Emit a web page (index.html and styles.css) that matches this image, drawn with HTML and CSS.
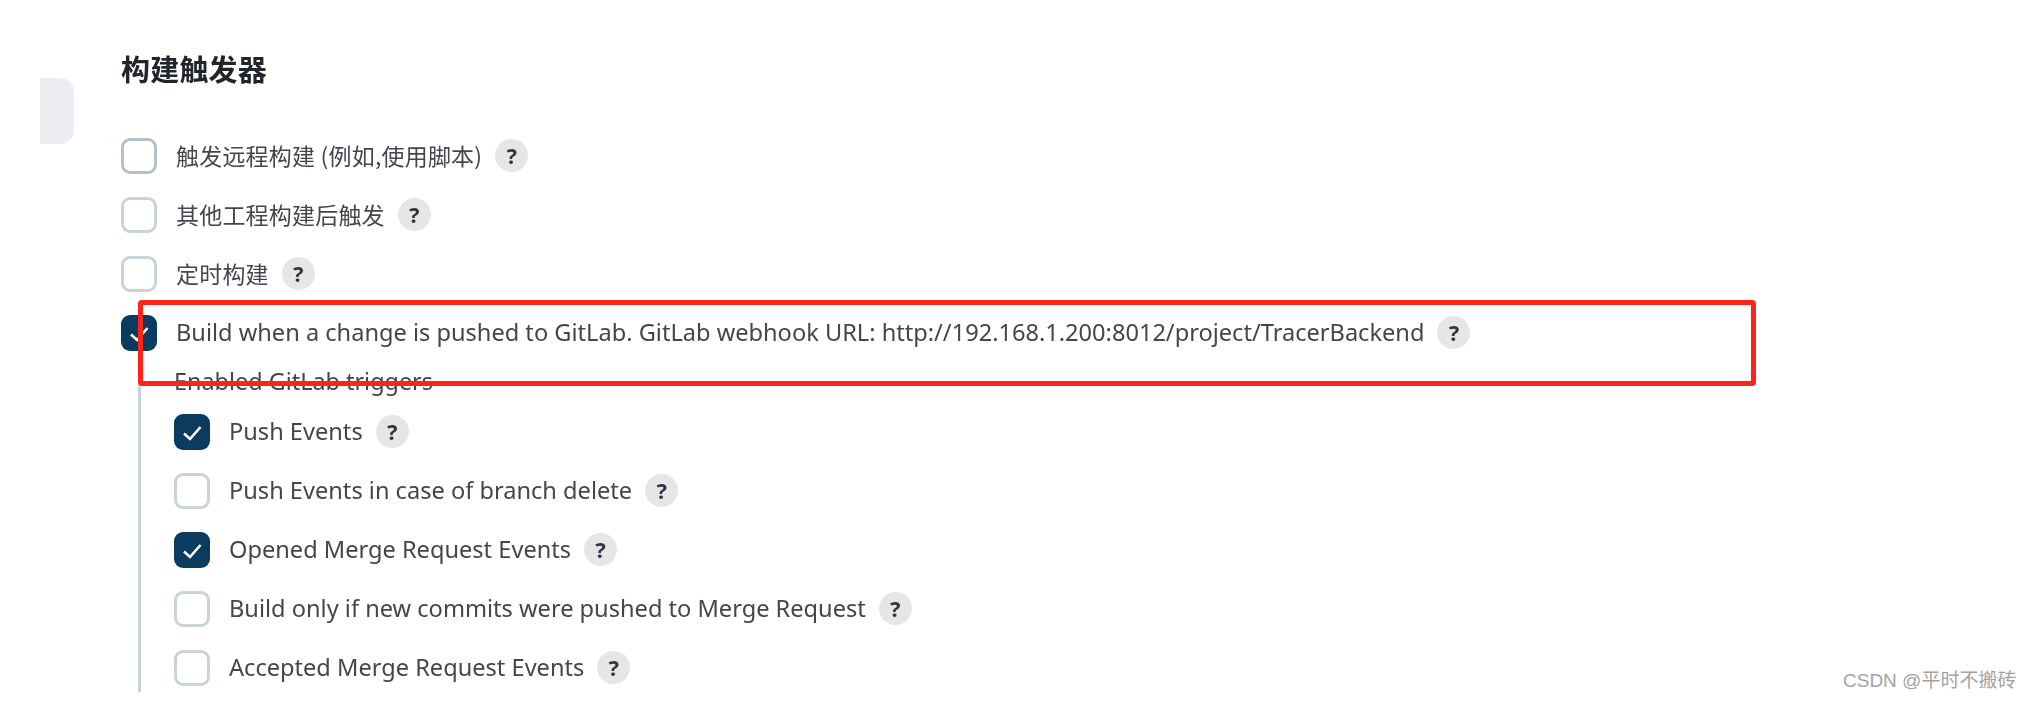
FILE: index.html
```html
<!DOCTYPE html>
<html lang="en">

<head>
    <meta charset="UTF-8">
    <meta name="viewport" content="width=device-width, initial-scale=1.0">
    <title>构建触发器</title>
    <link rel="stylesheet" href="styles.css">
</head>

<body>
    <div class="sideTab"></div>

    <div class="section">
        <h2 class="sectionTitle">构建触发器</h2>

        <div class="row">
            <span class="box focused"></span>
            <span class="label cjk">触发远程构建 (例如,使用脚本)</span>
            <span class="help">?</span>
        </div>
        <div class="row">
            <span class="box"></span>
            <span class="label cjk">其他工程构建后触发</span>
            <span class="help">?</span>
        </div>
        <div class="row">
            <span class="box"></span>
            <span class="label cjk">定时构建</span>
            <span class="help">?</span>
        </div>
        <div class="row">
            <span class="box checked">
                <svg viewBox="0 0 36 36"><path d="M10 19.5l6 5.5 10.5-12"/></svg>
            </span>
            <span class="label">Build when a change is pushed to GitLab. GitLab webhook URL: http://192.168.1.200:8012/project/TracerBackend</span>
            <span class="help">?</span>
        </div>

        <div class="nested">
            <div class="nestedTitle">Enabled GitLab triggers</div>
            <div class="row">
                <span class="box checked">
                    <svg viewBox="0 0 36 36"><path d="M10 19.5l6 5.5 10.5-12"/></svg>
                </span>
                <span class="label">Push Events</span>
                <span class="help">?</span>
            </div>
            <div class="row">
                <span class="box"></span>
                <span class="label">Push Events in case of branch delete</span>
                <span class="help">?</span>
            </div>
            <div class="row">
                <span class="box checked">
                    <svg viewBox="0 0 36 36"><path d="M10 19.5l6 5.5 10.5-12"/></svg>
                </span>
                <span class="label">Opened Merge Request Events</span>
                <span class="help">?</span>
            </div>
            <div class="row">
                <span class="box"></span>
                <span class="label">Build only if new commits were pushed to Merge Request</span>
                <span class="help">?</span>
            </div>
            <div class="row">
                <span class="box"></span>
                <span class="label">Accepted Merge Request Events</span>
                <span class="help">?</span>
            </div>
        </div>
    </div>

    <div class="redBox"></div>
    <div class="watermark">CSDN @平时不搬砖</div>
</body>

</html>
```

FILE: styles.css
```css
* {
    margin: 0;
    padding: 0;
    box-sizing: border-box;
}

body {
    width: 2031px;
    height: 701px;
    overflow: hidden;
    background-color: white;
    font-family: "Noto Sans", "Noto Sans CJK SC", sans-serif;
    color: #44464f;
}

.section {
    height: 692px;
    padding-left: 121px;
    overflow: hidden;
    filter: blur(0.5px);
}

.sectionTitle {
    height: 126px;
    padding-top: 47px;
    font-size: 29px;
    letter-spacing: 0.2px;
    line-height: 42px;
    font-weight: 700;
    color: #23252d;
    font-family: "Noto Sans CJK SC", sans-serif;
}

.row {
    display: flex;
    align-items: center;
    height: 59px;
}

.box {
    flex: none;
    width: 36px;
    height: 36px;
    margin-right: 19px;
    border: 3px solid #c9d3da;
    border-radius: 9px;
    background-color: white;
}

.box.focused {
    border-color: #b4c1ca;
}

.box.checked {
    border: none;
    background-color: #0b3c60;
}

.box svg {
    display: block;
    width: 36px;
    height: 36px;
}

.box path {
    fill: none;
    stroke: white;
    stroke-width: 2.6;
}

.label {
    font-size: 23.6px;
    line-height: 30px;
    margin-top: -2px;
    white-space: nowrap;
}

.label.cjk {
    font-size: 23px;
    letter-spacing: 0.2px;
    font-family: "Noto Sans CJK SC", sans-serif;
}

.help {
    flex: none;
    width: 33px;
    height: 33px;
    margin-left: 13px;
    border-radius: 50%;
    background-color: #e6e6e6;
    color: #33353d;
    font-size: 22px;
    font-weight: 700;
    line-height: 32px;
    text-align: center;
}

.nested {
    margin-left: 17px;
    margin-top: -11px;
    padding-top: 11px;
    padding-left: 33px;
    border-left: 3px solid #c9d3da;
}

.nestedTitle {
    height: 40px;
    font-size: 23.4px;
    line-height: 38px;
}

/* annotation drawn over the form */
.redBox {
    position: absolute;
    left: 138px;
    top: 300px;
    width: 1618px;
    height: 86px;
    border: 5px solid #fb2418;
    border-radius: 4px;
}

.sideTab {
    position: absolute;
    left: 40px;
    top: 78px;
    width: 34px;
    height: 66px;
    background-color: #eceef4;
    border-radius: 0 14px 14px 0;
}

.watermark {
    position: absolute;
    left: 1843px;
    top: 669px;
    font-family: "Liberation Sans", "Noto Sans CJK SC", sans-serif;
    font-size: 19px;
    line-height: 24px;
    color: #a3a3a3;
    white-space: nowrap;
}
```
